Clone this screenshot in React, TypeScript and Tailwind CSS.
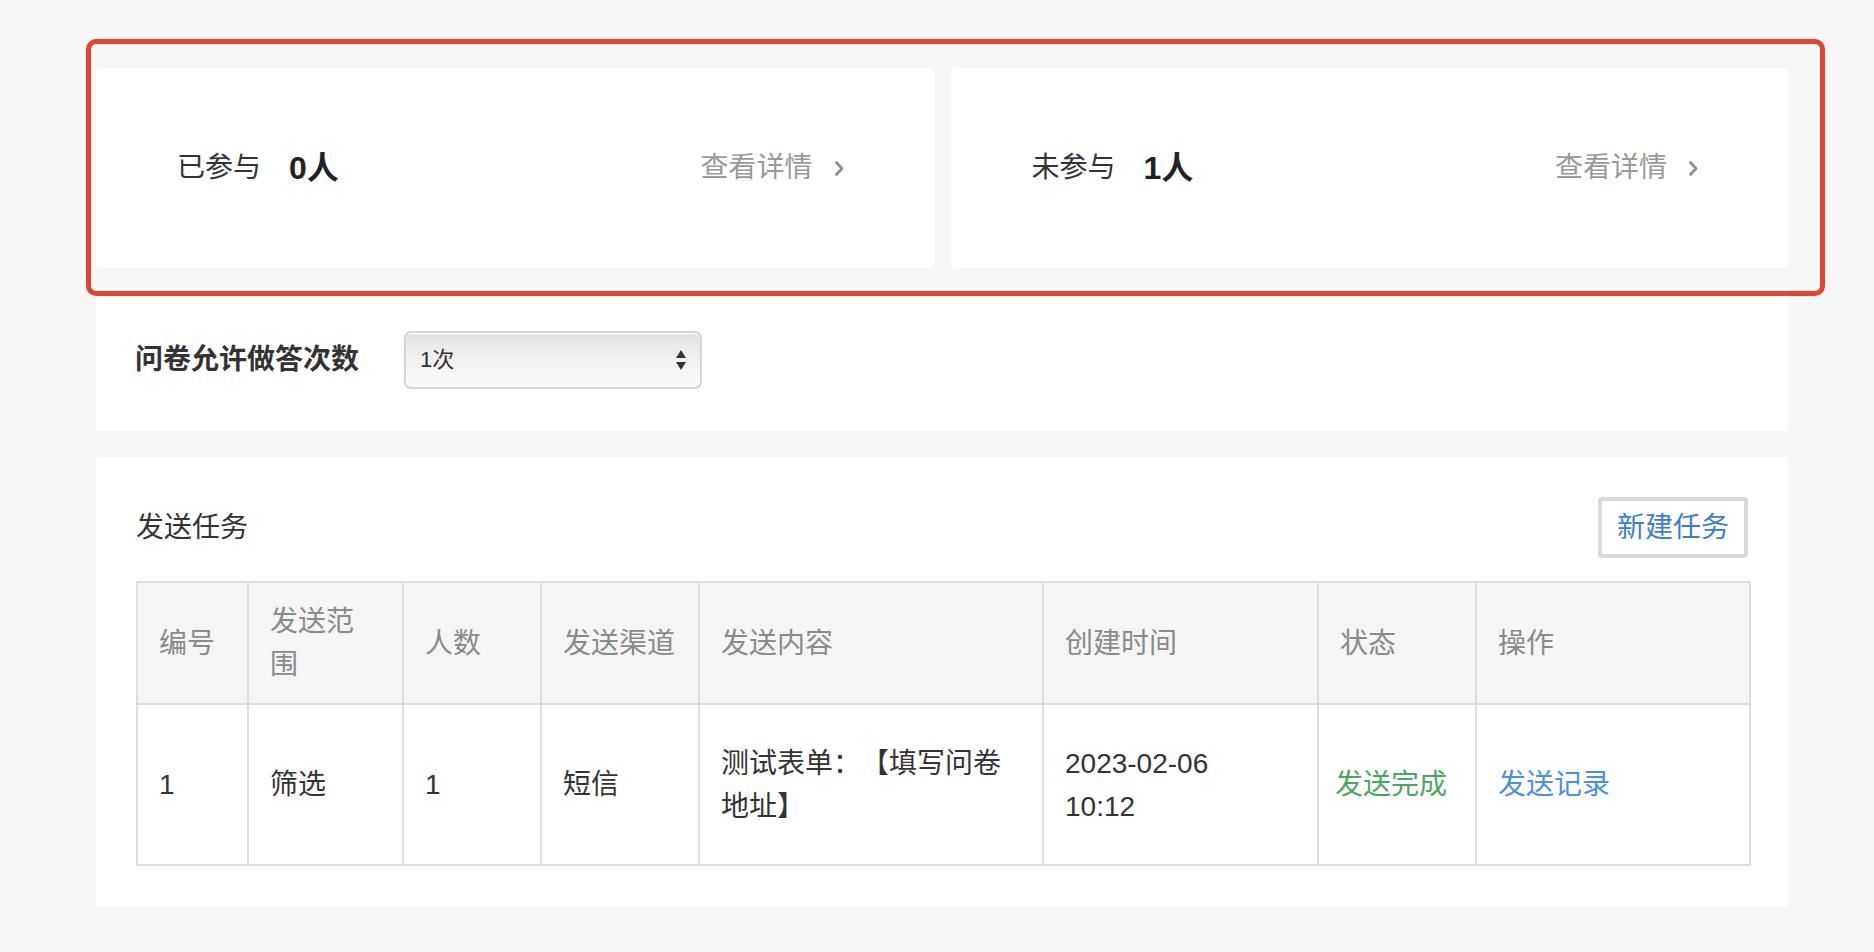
import React from "react";

function Chevron() {
  return (
    <svg width="11" height="17" viewBox="0 0 11 17" className="ml-[21px]">
      <path d="M2.5 2.5 L8 8.5 L2.5 14.5" fill="none" stroke="#8f8f8f" strokeWidth="2.8" strokeLinecap="round" strokeLinejoin="round" />
    </svg>
  );
}

function StatCard({ label, value }: { label: string; value: string }) {
  return (
    <div className="flex items-center justify-between bg-white rounded-[4px] pl-[81px] pr-[89px] h-[200px]">
      <div className="flex items-center">
        <span className="text-[28px] text-[#333]">{label}</span>
        <span className="ml-[28px] text-[32px] font-semibold text-[#222]">{value}</span>
      </div>
      <div className="flex items-center">
        <span className="text-[28px] text-[#999]">查看详情</span>
        <Chevron />
      </div>
    </div>
  );
}

const headers = ["编号", "发送范围", "人数", "发送渠道", "发送内容", "创建时间", "状态", "操作"];
const widths = [111, 155, 138, 158, 344, 275, 158, 274];

export default function App() {
  return (
    <div className="relative min-h-screen bg-[#f7f7f7] font-['Liberation_Sans','Noto_Sans_CJK_SC',sans-serif]">
      <div className="pl-[96px] pr-[86px] pt-[68px] pb-[47px]">
        <div className="grid grid-cols-2 gap-[17px]">
          <StatCard label="已参与" value="0人" />
          <StatCard label="未参与" value="1人" />
        </div>

        <div className="mt-[20px] h-[143px] bg-white flex items-center pl-[39px]">
          <span className="text-[28px] font-bold text-[#333]">问卷允许做答次数</span>
          <div className="ml-[45px] w-[298px] h-[58px] rounded-[7px] border-2 border-[#d4d4d4] bg-linear-to-b from-[#e4e4e4] via-[#f1f1f1] to-[#fcfcfc] flex items-center justify-between pl-[14px] pr-[13px] shadow-[inset_0_1px_0_#fff]">
            <span className="text-[22px] text-[#333]">1次</span>
            <svg width="12" height="22" viewBox="0 0 12 22">
              <path d="M6 1 L11 9 L1 9 Z" fill="#333" />
              <path d="M6 21 L11 13 L1 13 Z" fill="#333" />
            </svg>
          </div>
        </div>

        <div className="mt-[26px] bg-white px-[40px] pt-[40px] pb-[41px] rounded-[2px]">
          <div className="flex items-center justify-between">
            <span className="text-[28px] text-[#333]">发送任务</span>
            <button className="h-[61px] w-[150px] border-[4px] border-[#d9d9d9] rounded-[4px] bg-white text-[28px] text-[#3b7dd0] flex items-center justify-center">
              新建任务
            </button>
          </div>
          <table className="mt-[23px] w-full table-fixed border-collapse border-2 border-[#dddddd] [text-spacing-trim:space-all]">
            <colgroup>
              {widths.map((w, i) => (
                <col key={i} style={{ width: w }} />
              ))}
            </colgroup>
            <thead>
              <tr className="h-[122px] bg-[#f5f5f5]">
                {headers.map((h) => (
                  <th
                    key={h}
                    className={
                      h === "发送范围"
                        ? "border-2 border-[#dddddd] pl-[21px] pr-[26px] text-left align-middle text-[28px] leading-[43px] font-normal text-[#8a8a8a]"
                        : "border-2 border-[#dddddd] pl-[21px] pr-[14px] text-left align-middle text-[28px] leading-[43px] font-normal text-[#8a8a8a]"
                    }
                  >
                    {h}
                  </th>
                ))}
              </tr>
            </thead>
            <tbody>
              <tr className="h-[161px] bg-white text-[28px] leading-[43px] text-[#333]">
                <td className="border-2 border-[#dddddd] pl-[21px] pr-[18px] align-middle">1</td>
                <td className="border-2 border-[#dddddd] pl-[21px] pr-[18px] align-middle">筛选</td>
                <td className="border-2 border-[#dddddd] pl-[21px] pr-[18px] align-middle">1</td>
                <td className="border-2 border-[#dddddd] pl-[21px] pr-[18px] align-middle">短信</td>
                <td className="border-2 border-[#dddddd] pl-[21px] pr-[18px] align-middle">测试表单：【填写问卷地址】</td>
                <td className="border-2 border-[#dddddd] pl-[21px] pr-[18px] align-middle">
                  2023-02-06
                  <br />
                  10:12
                </td>
                <td className="border-2 border-[#dddddd] pl-[16px] pr-[10px] align-middle text-[#4aa85c]">发送完成</td>
                <td className="border-2 border-[#dddddd] pl-[21px] pr-[18px] align-middle text-[#4a90e2]">发送记录</td>
              </tr>
            </tbody>
          </table>
        </div>
      </div>

      <div className="absolute left-[86px] top-[39px] w-[1739px] h-[257px] border-[5px] border-[#e5432d] rounded-[10px] pointer-events-none" />
    </div>
  );
}
